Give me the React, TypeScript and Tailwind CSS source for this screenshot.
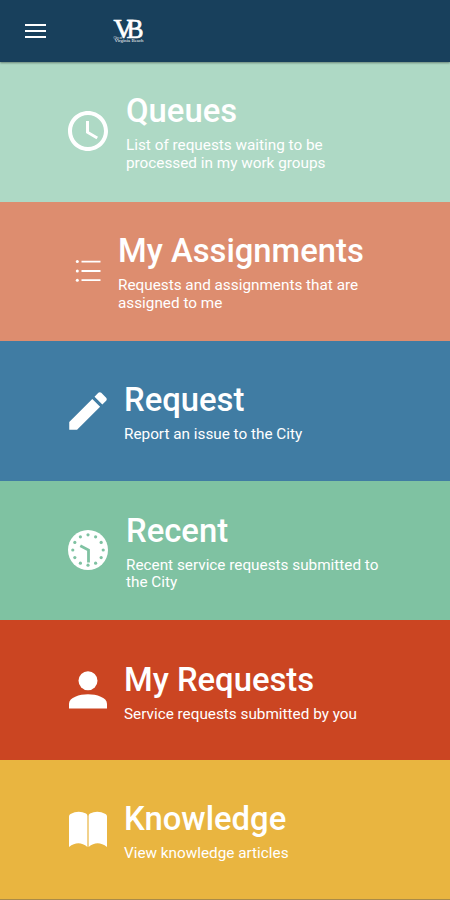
import React from 'react'

function ClockIcon() {
    return (
        <svg viewBox="0 0 24 24" fill="currentColor" className="-mt-px h-12 w-12">
            <path d="M11.99 2C6.47 2 2 6.48 2 12s4.47 10 9.99 10C17.52 22 22 17.52 22 12S17.52 2 11.99 2zM12 20c-4.42 0-8-3.58-8-8s3.58-8 8-8 8 3.58 8 8-3.58 8-8 8z" />
            <path d="M12.5 7H11v6l5.25 3.15.75-1.23-4.5-2.67z" />
        </svg>
    )
}

function ListIcon() {
    return (
        <svg viewBox="0 0 26 24" fill="currentColor" className="h-6 w-[26px]">
            <circle cx="2.3" cy="2.6" r="1.5" />
            <circle cx="2.3" cy="12" r="1.5" />
            <circle cx="2.3" cy="21.2" r="1.5" />
            <path d="M6.500 1.700h19v1.900h-19zM6.500 11h19v1.900h-19zM6.500 20.200h19v1.900h-19z" />
        </svg>
    )
}

function PencilIcon() {
    return (
        <svg viewBox="0 0 24 24" fill="currentColor" className="h-[50px] w-[50px] shrink-0">
            <path d="M3 17.25V21h3.75L17.81 9.94l-3.75-3.75L3 17.25zM20.71 7.04c.39-.39.39-1.02 0-1.41l-2.34-2.34c-.39-.39-1.02-.39-1.41 0l-1.83 1.83 3.75 3.75 1.83-1.83z" />
        </svg>
    )
}

function DialIcon() {
    const marks = Array.from({ length: 12 }, (_, i) => (i * Math.PI) / 6)
    return (
        <svg viewBox="0 0 40 40" className="h-10 w-10">
            <circle cx="20" cy="20" r="20" fill="currentColor" />
            <g fill="#7fc2a2">
                {marks.map((a) => (
                    <circle key={a} cx={20 + 15.2 * Math.sin(a)} cy={20 - 15.2 * Math.cos(a)} r="1.6" />
                ))}
            </g>
            <path d="M12.3 15.7L20.5 20v12.5" fill="none" stroke="#7fc2a2" strokeWidth="2.8" />
        </svg>
    )
}

function PersonIcon() {
    return (
        <svg viewBox="0 0 38 38" fill="currentColor" className="mt-px h-[38px] w-[38px]">
            <circle cx="19" cy="9.7" r="9.5" />
            <path d="M0 37.5v-4.8C0 26.5 10.5 23.3 19 23.3s19 3.2 19 9.4v4.8z" />
        </svg>
    )
}

function BookIcon() {
    return (
        <svg viewBox="0 0 38 38" fill="currentColor" className="mt-[2px] h-[38px] w-[38px]">
            <path d="M0 5.5Q0 3.8 1.5 3Q9.5-1.3 17 2.6Q18.4 3.4 18.4 5V36Q9.500 28.500 0 36z" />
            <path d="M38 5.5Q38 3.8 36.5 3Q28.5-1.3 21 2.6Q19.6 3.4 19.6 5V36Q28.500 28.500 38 36z" />
        </svg>
    )
}

function Logo() {
    return (
        <svg viewBox="0 0 32 30" fill="currentColor" overflow="visible" className="h-[30px] w-8" style={{ fontFamily: '"Liberation Serif", serif' }}>
            <text x="0.5" y="22" fontSize="28" textLength="20" lengthAdjust="spacingAndGlyphs" stroke="currentColor" strokeWidth="0.7">V</text>
            <text x="13.5" y="22" fontSize="28" textLength="17" lengthAdjust="spacingAndGlyphs" stroke="currentColor" strokeWidth="0.7">B</text>
            <text x="0.5" y="22.5" fontSize="3">City of</text>
            <text x="1.5" y="26" fontSize="5" textLength="29" lengthAdjust="spacingAndGlyphs">Virginia Beach</text>
        </svg>
    )
}

const items = [
    { title: 'Queues', text: 'List of requests waiting to be processed in my work groups', color: 'bg-[#aed9c5]', pad: 'pt-[2px] pl-[14px]', width: 'w-[210px]', icon: <ClockIcon /> },
    { title: 'My Assignments', text: 'Requests and assignments that are assigned to me', color: 'bg-[#dd8d6f]', pad: 'pt-[3px] pl-[6px]', width: 'w-[255px]', icon: <ListIcon /> },
    { title: 'Request', text: 'Report an issue to the City', color: 'bg-[#407ca3]', pad: 'pt-[4px] pl-[12px]', width: 'w-[270px]', icon: <PencilIcon /> },
    { title: 'Recent', text: 'Recent service requests submitted to the City', color: 'bg-[#7fc2a2]', pad: 'pt-[4px] pl-[14px]', width: 'w-[265px]', icon: <DialIcon /> },
    { title: 'My Requests', text: 'Service requests submitted by you', color: 'bg-[#cb4522]', pad: 'pt-[5px] pl-[12px]', width: 'w-[270px]', icon: <PersonIcon /> },
    { title: 'Knowledge', text: 'View knowledge articles', color: 'bg-[#e9b540]', pad: 'pt-[5px] pl-[12px]', width: 'w-[270px]', icon: <BookIcon /> },
]

function App() {
    return (
        <div className="flex h-[900px] w-[450px] flex-col overflow-hidden border-b border-[#a98a48] font-['Roboto',sans-serif] text-white">
            <header className="z-10 flex h-[62px] shrink-0 items-center bg-[#18405c] pl-[25px] shadow-[0_1px_2px_rgba(0,0,0,0.4)]">
                <button type="button" aria-label="Menu" className="flex w-[21px] flex-col gap-[4px]">
                    <span className="h-[2px] bg-white" />
                    <span className="h-[2px] bg-white" />
                    <span className="h-[2px] bg-white" />
                </button>
                <div className="ml-[67px]">
                    <Logo />
                </div>
            </header>
            <main className="flex grow flex-col">
                {items.map((item) => (
                    <a key={item.title} className={`flex flex-1 items-center pl-[64px] ${item.color}`}>
                        <div className="flex w-12 shrink-0 justify-center">{item.icon}</div>
                        <div className={item.pad}>
                            <h2 className="text-[32.8px] leading-[37px] font-medium whitespace-nowrap">{item.title}</h2>
                            <p className={`mt-[7px] text-[15.3px] leading-[17.5px] ${item.width}`}>{item.text}</p>
                        </div>
                    </a>
                ))}
            </main>
        </div>
    )
}

export default App
